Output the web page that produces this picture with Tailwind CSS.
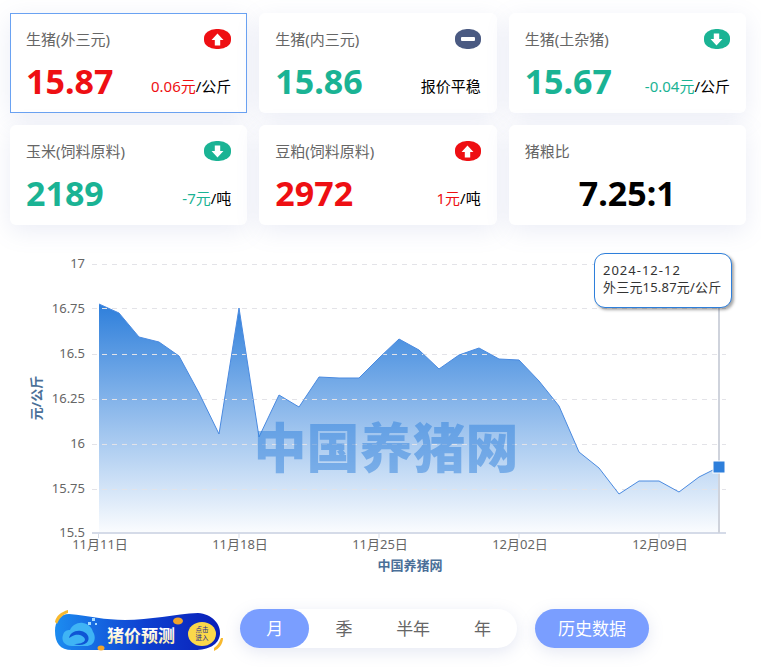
<!DOCTYPE html>
<html lang="zh-CN">
<head>
  <meta charset="UTF-8">
  <title>猪价行情</title>
  <script src="https://cdn.jsdelivr.net/npm/@tailwindcss/browser@4"></script>
</head>
<body class="bg-white text-[#666] font-['Noto_Sans','Noto_Sans_CJK_SC',sans-serif] w-[761px] h-[667px] overflow-hidden">

  <!-- 价格卡片 -->
  <div class="grid grid-cols-3 gap-3 pt-[13px] pl-[10px] pr-[15px]">
    <div class="h-[100px] bg-white border border-[#6aa2f2] px-[15px] pt-[14px] shadow-[0_6px_24px_rgba(110,130,190,0.14)]">
      <div class="flex justify-between items-center h-[22px]">
        <span class="text-[15px] leading-[22px]">生猪(外三元)</span>
        <span class="w-[27px] h-[20px] rounded-[45%] bg-[#ee0f13] flex items-center justify-center">
          <svg width="13" height="13" viewBox="0 0 12 12"><path d="M6 0.5 L11.5 6.5 H8.5 V11.5 H3.5 V6.5 H0.5 Z" fill="#fff"/></svg>
        </span>
      </div>
      <div class="flex justify-between items-end mt-[9px]">
        <span class="text-[34px] leading-[44px] font-bold text-[#ee0f13]">15.87</span>
        <span class="text-[15px] leading-[22px] mb-[6px] text-black"><span class="text-[#ee0f13]">0.06元</span>/公斤</span>
      </div>
    </div>

    <div class="h-[100px] bg-white rounded-md px-4 pt-[15px] shadow-[0_6px_24px_rgba(110,130,190,0.14)]">
      <div class="flex justify-between items-center h-[22px]">
        <span class="text-[15px] leading-[22px]">生猪(内三元)</span>
        <span class="w-[26px] h-[20px] rounded-[45%] bg-[#4a5a82] flex items-center justify-center">
          <span class="w-[14px] h-[4px] rounded-[1px] bg-white"></span>
        </span>
      </div>
      <div class="flex justify-between items-end mt-[9px]">
        <span class="text-[34px] leading-[44px] font-bold text-[#1ab394]">15.86</span>
        <span class="text-[15px] leading-[22px] mb-[6px] text-black">报价平稳</span>
      </div>
    </div>

    <div class="h-[100px] bg-white rounded-md px-4 pt-[15px] shadow-[0_6px_24px_rgba(110,130,190,0.14)]">
      <div class="flex justify-between items-center h-[22px]">
        <span class="text-[15px] leading-[22px]">生猪(土杂猪)</span>
        <span class="w-[26px] h-[20px] rounded-[45%] bg-[#1ab394] flex items-center justify-center">
          <svg width="13" height="13" viewBox="0 0 12 12"><path d="M6 11.5 L11.5 5.5 H8.5 V0.5 H3.5 V5.5 H0.5 Z" fill="#fff"/></svg>
        </span>
      </div>
      <div class="flex justify-between items-end mt-[9px]">
        <span class="text-[34px] leading-[44px] font-bold text-[#1ab394]">15.67</span>
        <span class="text-[15px] leading-[22px] mb-[6px] text-black"><span class="text-[#1ab394]">-0.04元</span>/公斤</span>
      </div>
    </div>

    <div class="h-[100px] bg-white rounded-md px-4 pt-[15px] shadow-[0_6px_24px_rgba(110,130,190,0.14)]">
      <div class="flex justify-between items-center h-[22px]">
        <span class="text-[15px] leading-[22px]">玉米(饲料原料)</span>
        <span class="w-[27px] h-[20px] rounded-[45%] bg-[#1ab394] flex items-center justify-center">
          <svg width="13" height="13" viewBox="0 0 12 12"><path d="M6 11.5 L11.5 5.5 H8.5 V0.5 H3.5 V5.5 H0.5 Z" fill="#fff"/></svg>
        </span>
      </div>
      <div class="flex justify-between items-end mt-[9px]">
        <span class="text-[34px] leading-[44px] font-bold text-[#1ab394]">2189</span>
        <span class="text-[15px] leading-[22px] mb-[6px] text-black"><span class="text-[#1ab394]">-7元</span>/吨</span>
      </div>
    </div>

    <div class="h-[100px] bg-white rounded-md px-4 pt-[15px] shadow-[0_6px_24px_rgba(110,130,190,0.14)]">
      <div class="flex justify-between items-center h-[22px]">
        <span class="text-[15px] leading-[22px]">豆粕(饲料原料)</span>
        <span class="w-[26px] h-[20px] rounded-[45%] bg-[#ee0f13] flex items-center justify-center">
          <svg width="13" height="13" viewBox="0 0 12 12"><path d="M6 0.5 L11.5 6.5 H8.5 V11.5 H3.5 V6.5 H0.5 Z" fill="#fff"/></svg>
        </span>
      </div>
      <div class="flex justify-between items-end mt-[9px]">
        <span class="text-[34px] leading-[44px] font-bold text-[#ee0f13]">2972</span>
        <span class="text-[15px] leading-[22px] mb-[6px] text-black"><span class="text-[#ee0f13]">1元</span>/吨</span>
      </div>
    </div>

    <div class="h-[100px] bg-white rounded-md px-4 pt-[15px] shadow-[0_6px_24px_rgba(110,130,190,0.14)]">
      <div class="flex items-center h-[22px]">
        <span class="text-[15px] leading-[22px]">猪粮比</span>
      </div>
      <div class="text-center mt-[9px]">
        <span class="text-[34px] leading-[44px] font-bold text-black">7.25:1</span>
      </div>
    </div>
  </div>

  <!-- 走势图 -->
  <div class="relative mt-[15px] h-[360px]">
    <svg width="761" height="360" viewBox="0 240 761 360" class="block">
      <defs>
        <linearGradient id="areaFill" gradientUnits="userSpaceOnUse" x1="0" y1="304" x2="0" y2="533">
          <stop offset="0" stop-color="#2e7fdb"/>
          <stop offset="1" stop-color="#2e7fdb" stop-opacity="0.02"/>
        </linearGradient>
      </defs>

      <polygon fill="url(#areaFill)" points="99,533 99,304 119,313 139,337 159,342 179,356 199,393 219,434 239,308 259,437 279,395 299,407 319,377 339,378 359,378 379,358 399,339 419,350 439,369 459,355 479,348 499,359 519,360 539,381 559,406 579,452 599,468 619,494 639,481 659,481 679,492 699,477 719,467 719,533"/>

      <g stroke="#e3e3e8" stroke-dasharray="5 5" stroke-width="1">
        <line x1="92" x2="726" y1="264.5" y2="264.5"/>
        <line x1="92" x2="726" y1="308.5" y2="308.5"/>
        <line x1="92" x2="726" y1="354.5" y2="354.5"/>
        <line x1="92" x2="726" y1="399.5" y2="399.5"/>
        <line x1="92" x2="726" y1="444.5" y2="444.5"/>
        <line x1="92" x2="726" y1="489.5" y2="489.5"/>
      </g>

      <polyline fill="none" stroke="#4a8ae0" stroke-width="1" points="99,304 119,313 139,337 159,342 179,356 199,393 219,434 239,308 259,437 279,395 299,407 319,377 339,378 359,378 379,358 399,339 419,350 439,369 459,355 479,348 499,359 519,360 539,381 559,406 579,452 599,468 619,494 639,481 659,481 679,492 699,477 719,467"/>

      <text x="386" y="468" text-anchor="middle" fill="#2e7fdb" fill-opacity="0.5" class="text-[53px] font-black">中国养猪网</text>

      <line x1="92" x2="726" y1="533" y2="533" stroke="#d5dbe8" stroke-width="2"/>
      <g stroke="#d5dbe8" stroke-width="1">
        <line x1="98.5" x2="98.5" y1="533" y2="538"/>
        <line x1="239" x2="239" y1="533" y2="538"/>
        <line x1="379" x2="379" y1="533" y2="538"/>
        <line x1="519" x2="519" y1="533" y2="538"/>
        <line x1="659" x2="659" y1="533" y2="538"/>
      </g>

      <line x1="719" x2="719" y1="264" y2="533" stroke="#cfd3dc" stroke-width="2"/>
      <rect x="713" y="461" width="12" height="12" fill="#2e7fdb" stroke="#fff" stroke-width="1"/>

      <g fill="#666" text-anchor="end" class="text-[13px]">
        <text x="85" y="268">17</text>
        <text x="85" y="313">16.75</text>
        <text x="85" y="358">16.5</text>
        <text x="85" y="403">16.25</text>
        <text x="85" y="448">16</text>
        <text x="85" y="493">15.75</text>
        <text x="85" y="537">15.5</text>
      </g>
      <g fill="#666" text-anchor="middle" class="text-[13px]">
        <text x="100" y="549">11月11日</text>
        <text x="240" y="549">11月18日</text>
        <text x="380" y="549">11月25日</text>
        <text x="520" y="549">12月02日</text>
        <text x="660" y="549">12月09日</text>
      </g>

      <text x="410" y="570" text-anchor="middle" fill="#4a6f98" class="text-[13px] font-bold">中国养猪网</text>
      <text transform="translate(41 398) rotate(-90)" text-anchor="middle" fill="#4a6f98" class="text-[13px] font-bold">元/公斤</text>
    </svg>

    <!-- 提示框 -->
    <div class="absolute left-[594px] top-[13px] w-[138px] h-[55px] bg-white border border-[#2e7fdb] rounded-[11px] shadow-[2px_2px_3px_rgba(0,0,0,0.35)] pl-2 pt-[8px] text-[13px] leading-[17px] text-[#333] whitespace-nowrap">
      <div class="tracking-[1px]">2024-12-12</div>
      <div class="tracking-[0.2px]">外三元15.87元/公斤</div>
    </div>
  </div>

  <!-- 底部操作 -->
  <div class="flex items-center h-[39px] mt-[9px] pl-[54px]">
    <svg width="170" height="48" viewBox="54 605 170 48" class="block shrink-0">
      <defs>
        <linearGradient id="bannerFill" x1="0" y1="0" x2="1" y2="0">
          <stop offset="0" stop-color="#1c8cf0"/>
          <stop offset="0.55" stop-color="#0e3fd0"/>
          <stop offset="1" stop-color="#0a1fb8"/>
        </linearGradient>
        <linearGradient id="bannerText" x1="0" y1="0" x2="0" y2="1">
          <stop offset="0.2" stop-color="#fff"/>
          <stop offset="1" stop-color="#fde9a0"/>
        </linearGradient>
      </defs>
      <path d="M69 614 C90 616 105 620 125 620 C150 620 175 614 198 613 C212 614 221 624 220 634 C219 645 208 650 195 650 C170 650 140 650 110 650 L72 650 C60 650 55 643 55 631 C55 621 60 614 69 614 Z" fill="url(#bannerFill)"/>
      <path d="M55 622 C56 616 61 612 68 610 L68 613 C62 615 59 619 57 624 Z" fill="#f8b92e"/>
      <path d="M223 638 C223 644 219 649 214 651 L214 648 C217 646 219 643 221 638 Z" fill="#f8b92e"/>
      <path d="M72 646 C64 646 61 640 63 635 C64 631 67 630 70 630 C72 625 78 622 83 623 C89 624 92 628 93 632 C96 636 96 646 86 646 Z" fill="#3fb4f5"/>
      <path d="M69 638 C70 633 75 630 81 631 C87 632 90 637 88 641 C86 645 79 646 74 644 C79 644 84 643 85 640 C85 636 79 634 75 635 C72 636 71 637 69 638 Z" fill="#0f55d5"/>
      <g fill="#a9dcff">
        <rect x="88" y="622" width="3" height="3"/>
        <rect x="92" y="618" width="3" height="3"/>
        <rect x="95" y="623" width="2" height="2"/>
      </g>
      <ellipse cx="178" cy="621" rx="5" ry="3.5" fill="#f2a52b"/>
      <ellipse cx="101" cy="648" rx="3.5" ry="2.5" fill="#f2a52b"/>
      <text x="107" y="642" fill="url(#bannerText)" class="text-[17px] font-bold">猪价预测</text>
      <ellipse cx="202" cy="634" rx="14" ry="12" fill="#fbd84a"/>
      <g fill="#1b2a8c" text-anchor="middle" class="text-[6.5px]">
        <text x="202" y="632">点击</text>
        <text x="202" y="640">进入</text>
      </g>
    </svg>

    <div class="flex w-[277px] h-[39px] ml-4 bg-white rounded-full text-[17px] text-[#666] shadow-[0_4px_16px_rgba(110,130,190,0.18)]">
      <button class="w-1/4 rounded-full bg-[#7a9eff] text-white">月</button>
      <button class="w-1/4">季</button>
      <button class="w-1/4">半年</button>
      <button class="w-1/4">年</button>
    </div>

    <button class="w-[114px] h-[39px] ml-[18px] rounded-full bg-[#7a9eff] text-white text-[17px] shadow-[0_4px_16px_rgba(110,130,190,0.18)]">历史数据</button>
  </div>
</body>
</html>
